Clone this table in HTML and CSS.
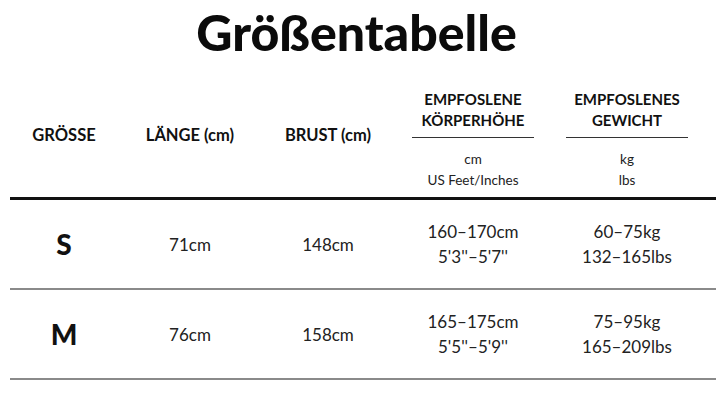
FILE: index.html
```html
<!DOCTYPE html>
<html lang="de">
<head>
<meta charset="utf-8">
<link rel="stylesheet" href="styles.css">
</head>
<body>
<div class="page">
  <h1 class="title">Größentabelle</h1>
  <div class="table">
    <div class="row head">
      <div class="cell hlabel">GRÖSSE</div>
      <div class="cell hlabel">LÄNGE (cm)</div>
      <div class="cell hlabel">BRUST (cm)</div>
      <div class="cell hgroup">
        <div class="hmain">EMPFOSLENE<br>KÖRPERHÖHE</div>
        <div class="hsub">cm<br>US Feet/Inches</div>
      </div>
      <div class="cell hgroup">
        <div class="hmain">EMPFOSLENES<br>GEWICHT</div>
        <div class="hsub">kg<br>lbs</div>
      </div>
    </div>
    <div class="row data">
      <div class="cell size">S</div>
      <div class="cell val">71cm</div>
      <div class="cell val">148cm</div>
      <div class="cell val">160–170cm<br>5'3''–5'7''</div>
      <div class="cell val">60–75kg<br>132–165lbs</div>
    </div>
    <div class="row data">
      <div class="cell size">M</div>
      <div class="cell val">76cm</div>
      <div class="cell val">158cm</div>
      <div class="cell val">165–175cm<br>5'5''–5'9''</div>
      <div class="cell val">75–95kg<br>165–209lbs</div>
    </div>
  </div>
</div>
</body>
</html>
```
FILE: styles.css
```css
* { box-sizing: border-box; }
html, body { margin: 0; padding: 0; background: #fff; }
body {
  font-family: Lato, "Liberation Sans", sans-serif;
  color: #111;
  width: 727px;
  height: 400px;
  overflow: hidden;
}
.page { padding-top: 4px; }
.title {
  margin: 0;
  padding-right: 14px;
  text-align: center;
  font-size: 50px;
  font-weight: 900;
  line-height: 56px;
  color: #0b0b0b;
}
.table {
  margin: 20px 11px 0 10px;
}
.row {
  display: grid;
  grid-template-columns: 108px 144px 132px 158px 150px;
  align-items: center;
}
.head {
  height: 120px;
  border-bottom: 3px solid #111;
}
.data {
  height: 90px;
  border-bottom: 2px solid #8a8a8a;
}
.cell { text-align: center; }
.hlabel {
  font-size: 16.5px;
  font-weight: 700;
  padding-bottom: 8px;
}
.hgroup {
  display: flex;
  flex-direction: column;
  align-items: center;
  align-self: start;
  padding-top: 9px;
}
.hmain {
  width: 122px;
  font-size: 15px;
  font-weight: 700;
  line-height: 21px;
  padding-bottom: 6px;
  border-bottom: 1px solid #333;
}
.hsub {
  font-size: 13.5px;
  line-height: 21px;
  padding-top: 11px;
  color: #222;
}
.size {
  font-size: 28px;
  font-weight: 900;
}
.val {
  font-size: 17px;
  line-height: 25px;
  color: #222;
}
```
